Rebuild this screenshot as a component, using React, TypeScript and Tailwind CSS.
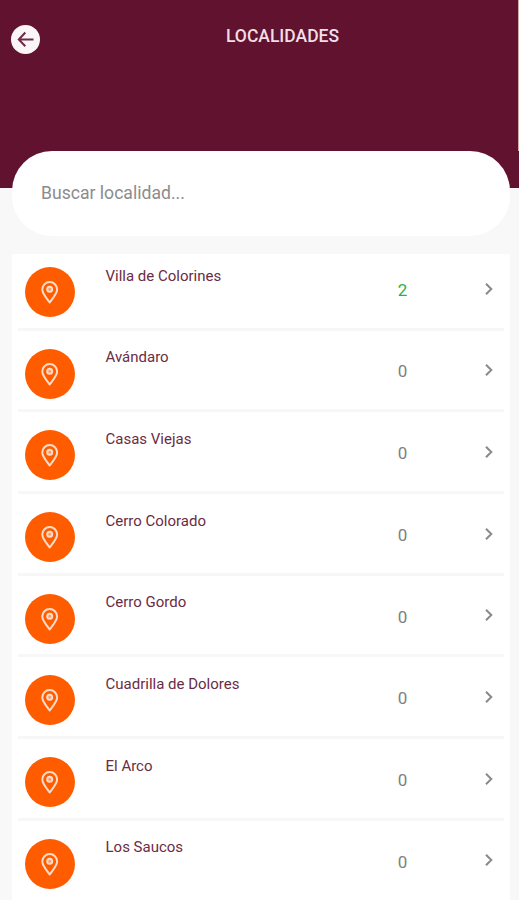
type Locality = { name: string; count: number };

const localities: Locality[] = [
  { name: "Villa de Colorines", count: 2 },
  { name: "Avándaro", count: 0 },
  { name: "Casas Viejas", count: 0 },
  { name: "Cerro Colorado", count: 0 },
  { name: "Cerro Gordo", count: 0 },
  { name: "Cuadrilla de Dolores", count: 0 },
  { name: "El Arco", count: 0 },
  { name: "Los Saucos", count: 0 },
];

function BackButton() {
  return (
    <button aria-label="Volver" className="absolute left-[11px] top-[25px] flex size-[29px] items-center justify-center rounded-full bg-[#faf6f8]">
      <svg width="29" height="29" viewBox="0 0 29 29" fill="none" stroke="#6f2a45" strokeWidth="2">
        <path d="M14.300 7.500 7.800 14.500l6.500 6.700M8 14.500h14.500" />
      </svg>
    </button>
  );
}

function PinBadge() {
  return (
    <span className="flex size-[50px] shrink-0 items-center justify-center rounded-full bg-[#ff5c00]">
      <svg width="50" height="50" viewBox="0 0 50 50" fill="none" stroke="#ffdcc8" strokeWidth="2" strokeLinejoin="round">
        <path d="M24.700 35.500c-2.600-3.800-7.400-8.700-7.400-13a7.400 7.400 0 0 1 14.800 0C32.100 26.800 27.300 31.700 24.700 35.500Z" />
        <circle cx="24.700" cy="22.200" r="2.500" fill="#ff9a60" />
      </svg>
    </span>
  );
}

function Row({ name, count }: Locality) {
  return (
    <li className="flex h-[81.700px] items-start border-b-[3px] border-[#f7f7f7] pl-[6.500px] pt-[18px]">
      <PinBadge />
      <span className="-mt-[0.400px] ml-[31px] w-[281px] text-[15px] leading-[18px] text-[#6b2c44]">{name}</span>
      <span className={`mt-[10.800px] w-[32px] text-center text-[17px] leading-[24px] ${count > 0 ? "text-[#2fb13c]" : "text-[#808080]"}`}>{count}</span>
      <svg className="ml-[60px] mt-[11.500px]" width="20" height="20" viewBox="0 0 20 20" fill="none" stroke="#8a8a8a" strokeWidth="2">
        <path d="m7 4.700 5.300 5.300L7 15.300" />
      </svg>
    </li>
  );
}

export default function App() {
  return (
    <div className="h-[900px] overflow-hidden bg-[#f8f8f8] font-[Roboto,sans-serif]">
      <header className="relative h-[188px] bg-[#61122f]">
        <BackButton />
        <h1 className="ml-[46px] pt-[26px] text-center text-[17.500px] font-medium leading-[20px] text-[#f0dfe6]">LOCALIDADES</h1>
        <span className="absolute right-0 top-0 h-[151px] w-[1.500px] bg-[#cfada6]" />
      </header>
      <main className="relative ml-[12px] mr-[9px] -mt-[37px]">
        <input
          className="block h-[85px] w-full rounded-[40px] bg-white px-[29px] pb-[1px] text-[17.600px] text-[#888888] outline-none placeholder:text-[#8c8c8c]"
          placeholder="Buscar localidad..."
        />
        <div className="mt-[18px] h-[646px] overflow-hidden bg-white">
          <ul className="-mt-[5px] ml-[6px] mr-[6px]">
            {localities.map((item) => (
              <Row key={item.name} {...item} />
            ))}
          </ul>
        </div>
      </main>
    </div>
  );
}
